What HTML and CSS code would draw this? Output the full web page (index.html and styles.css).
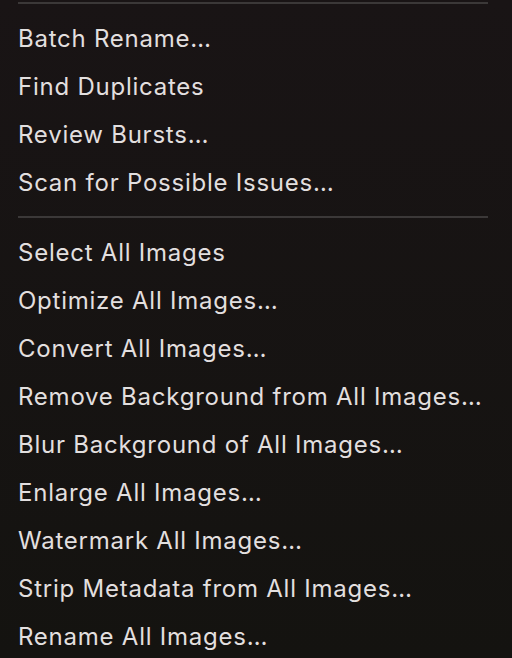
FILE: index.html
```html
<!DOCTYPE html>
<html lang="en">
<head>
  <meta charset="UTF-8" />
  <meta name="viewport" content="width=device-width, initial-scale=1.0"/>
  <title>Images Menu</title>

  <link rel="stylesheet" href="styles.css">
</head>

<body>
  <div class="menu">
    <div class="sep sep-top"><div class="line"></div></div>

    <div class="item">Batch Rename…</div>
    <div class="item">Find Duplicates</div>
    <div class="item">Review Bursts…</div>
    <div class="item">Scan for Possible Issues…</div>

    <div class="sep"><div class="line"></div></div>

    <div class="item">Select All Images</div>
    <div class="item">Optimize All Images…</div>
    <div class="item">Convert All Images…</div>
    <div class="item">Remove Background from All Images…</div>
    <div class="item">Blur Background of All Images…</div>
    <div class="item">Enlarge All Images…</div>
    <div class="item">Watermark All Images…</div>
    <div class="item">Strip Metadata from All Images…</div>
    <div class="item">Rename All Images…</div>
  </div>
</body>
</html>
```

FILE: styles.css
```css
html, body {
  margin: 0;
  height: 100%;
}
body {
  font-family: Inter, "Noto Sans", sans-serif;
  background: linear-gradient(#191415, #141310);
  color: #e2dfdf;
  overflow: hidden;
}
.menu {
  padding: 0 24px 0 18px;
}
.sep {
  padding: 9px 0 11px;
}
.sep-top {
  padding-top: 2px;
}
.line {
  height: 2px;
  background-color: #3b3838;
}
.item {
  height: 48px;
  line-height: 48px;
  font-size: 24px;
  letter-spacing: 0.76px;
  white-space: nowrap;
}
```
